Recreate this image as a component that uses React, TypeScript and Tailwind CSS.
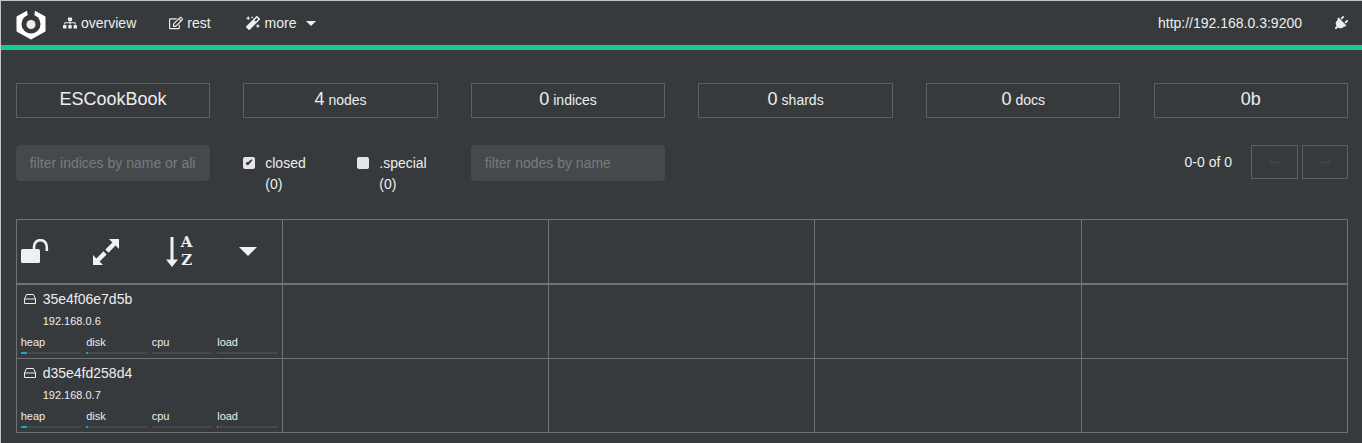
import { FaSitemap, FaRegEdit, FaMagic, FaPlug } from "react-icons/fa";

const STATS = [
  { value: "4", label: "nodes" },
  { value: "0", label: "indices" },
  { value: "0", label: "shards" },
  { value: "0", label: "docs" },
  { value: "0b", label: "" },
];

const NODES = [
  { name: "35e4f06e7d5b", ip: "192.168.0.6", bars: ["w-[11%]", "w-[3%]", "w-0", "w-0"], rowClass: "h-[74px] border-b border-[#6f7274]" },
  { name: "d35e4fd258d4", ip: "192.168.0.7", bars: ["w-[11%]", "w-[3%]", "w-0", "w-[2%]"], rowClass: "h-[73px]" },
];

const METRICS = ["heap", "disk", "cpu", "load"];

function Logo() {
  return (
    <svg width="30" height="32" viewBox="0 0 30 32" className="shrink-0">
      <path d="M15 1.5 L28.5 9 V23 L15 30.5 L1.5 23 V9 Z" fill="#fff" stroke="#fff" strokeWidth="2" strokeLinejoin="round" />
      <circle cx="15" cy="16" r="9.5" fill="#373a3d" />
      <path d="M10.5 0 H19.5 L18 9 H12 Z" fill="#373a3d" />
      <circle cx="15" cy="16.5" r="4.5" fill="#eceeef" />
    </svg>
  );
}

function UnlockIcon() {
  return (
    <svg width="28" height="24" viewBox="0 0 28 24" fill="none">
      <rect x="0" y="10" width="19" height="14" rx="1.5" fill="#eef0f2" />
      <path d="M13 11 V7.5 A6.2 6.2 0 0 1 25.8 7.5 V12" stroke="#eef0f2" strokeWidth="2.6" />
    </svg>
  );
}

function ExpandIcon() {
  return (
    <svg width="26" height="26" viewBox="0 0 26 26" fill="#eef0f2">
      <path d="M16 0 H26 V10 L22.6 6.6 L15.5 13.7 L12.3 10.5 L19.4 3.4 Z" />
      <path d="M10 26 H0 V16 L3.4 19.4 L10.5 12.3 L13.7 15.5 L6.6 22.6 Z" />
    </svg>
  );
}

function SortArrow() {
  return (
    <svg width="12" height="30" viewBox="0 0 12 30" fill="#eef0f2">
      <path d="M4.5 0 H7.5 V22.5 H12 L6 30 L0 22.5 H4.5 Z" />
    </svg>
  );
}

function HddIcon() {
  return (
    <svg width="12" height="10" viewBox="0 0 12 10" fill="none" stroke="#eceeef" className="shrink-0">
      <path d="M2.5 .5 H9.5 L11.5 5 V9.5 H.5 V5 Z M.5 5 H11.5" />
    </svg>
  );
}

function LongArrow({ flip }: { flip?: boolean }) {
  return (
    <svg width="14" height="7" viewBox="0 0 14 7" fill="none" stroke="#47494c" className={flip ? "-scale-x-100" : ""}>
      <path d="M14 3.5 H1 M4 .5 L1 3.5 L4 6.5" />
    </svg>
  );
}

function EmptyCells() {
  return (
    <>
      <div className="border-l border-[#6f7274]" />
      <div className="border-l border-[#6f7274]" />
      <div className="border-l border-[#6f7274]" />
      <div className="border-l border-[#6f7274]" />
    </>
  );
}

export default function App() {
  return (
    <div className="h-[443px] overflow-hidden border-t border-l border-[#c4c4c4] bg-[#373a3d] font-['Liberation_Sans',Arial,sans-serif] text-[#eceeef]">
      <nav className="flex h-[44px] items-center pr-[14px] pl-[15px] text-[14px]">
        <div className="pt-[1px]">
          <Logo />
        </div>
        <a className="ml-[17px] flex items-center gap-[4px]">
          <FaSitemap className="h-[14px] w-[14px]" />
          overview
        </a>
        <a className="ml-[33px] flex items-center gap-[4px]">
          <FaRegEdit className="h-[14px] w-[14px]" />
          rest
        </a>
        <a className="ml-[35px] flex items-center gap-[5px]">
          <FaMagic className="h-[14px] w-[14px]" />
          more
          <span className="ml-[4px] h-0 w-0 border-x-[5px] border-t-[5px] border-x-transparent border-t-[#eceeef]" />
        </a>
        <span className="mr-[31px] ml-auto">http://192.168.0.3:9200</span>
        <FaPlug className="h-[15px] w-[15px] rotate-45" />
      </nav>
      <div className="-ml-px h-[5px] border-l border-[#d9356f] bg-[#1dc78e]" />

      <main className="pt-[33px] pr-[14px] pl-[14.7px]">
        <div className="grid grid-cols-6 gap-x-[33.1px]">
          <div className="flex h-[35px] items-center justify-center border border-[#5d6063] pb-[2px] text-[18px]">ESCookBook</div>
          {STATS.map((s, i) => (
            <div key={i} className="flex h-[35px] items-center justify-center gap-[4px] border border-[#5d6063] pb-[2px] text-[18px]">
              {s.value}
              {s.label && <span className="pt-[2px] text-[14px]">{s.label}</span>}
            </div>
          ))}
        </div>

        <div className="mt-[27px] grid h-[47px] grid-cols-6 gap-x-[33.1px] text-[14px]">
          <input
            readOnly
            placeholder="filter indices by name or aliases"
            className="h-[36px] rounded-[4px] border border-[#46494c] bg-[#46494c] pr-[14px] pl-[13px] text-[14px] outline-none placeholder:text-[#787b7e]"
          />
          <div className="flex">
            <label className="flex w-[114px] items-start gap-[10px] pt-[8px]">
              <span className="mt-[4px] flex h-[12px] w-[12px] items-center justify-center rounded-[2px] bg-[#e6e6e6] text-[10px] leading-none font-bold text-[#333]">✔</span>
              <span className="leading-[21px]">closed<br />(0)</span>
            </label>
            <label className="flex items-start gap-[10px] pt-[8px]">
              <span className="mt-[4px] h-[12px] w-[12px] rounded-[2px] bg-[#e6e6e6]" />
              <span className="leading-[21px] whitespace-nowrap">.special<br />(0)</span>
            </label>
          </div>
          <input
            readOnly
            placeholder="filter nodes by name"
            className="h-[36px] rounded-[4px] border border-[#46494c] bg-[#46494c] px-[13px] text-[14px] outline-none placeholder:text-[#787b7e]"
          />
          <div className="col-span-3 flex h-[36px] items-start justify-end">
            <span className="mt-[7px] mr-[19px]">0-0 of 0</span>
            <button className="flex h-[34px] w-[47px] items-center justify-center border border-[#5d6063]"><LongArrow /></button>
            <button className="ml-[4px] flex h-[34px] w-[46px] items-center justify-center border border-[#5d6063]"><LongArrow flip /></button>
          </div>
        </div>

        <div className="mt-[27px] border border-[#6f7274]">
          <div className="grid h-[65px] grid-cols-[265px_1fr_1fr_1fr_1fr] border-b-2 border-[#6f7274]">
            <div className="flex items-center pl-[4px] text-[#eef0f2]">
              <span className="-mt-[2px] flex"><UnlockIcon /></span>
              <span className="mt-[1px] ml-[44px] flex"><ExpandIcon /></span>
              <span className="ml-[47px] flex"><SortArrow /></span>
              <span className="ml-[2px] flex w-[14px] flex-col items-center font-['DejaVu_Serif',serif] text-[15px] leading-[17.5px] font-bold">
                <span>A</span>
                <span>Z</span>
              </span>
              <span className="ml-[45px] h-0 w-0 border-x-[9px] border-t-[9px] border-x-transparent border-t-[#eef0f2]" />
            </div>
            <EmptyCells />
          </div>
          {NODES.map((n) => (
            <div key={n.name} className={`grid grid-cols-[265px_1fr_1fr_1fr_1fr] ${n.rowClass}`}>
              <div className="px-[4px]">
                <div className="flex items-center pt-[6px] pl-[3px] text-[14px] leading-[16px]">
                  <HddIcon />
                  <span className="ml-[7px]">{n.name}</span>
                </div>
                <div className="mt-[7px] pl-[22px] text-[11px] leading-[14px]">{n.ip}</div>
                <div className="mt-[8px] grid grid-cols-4 gap-x-[5px]">
                  {METRICS.map((m, i) => (
                    <div key={m} className="text-[11px] leading-[12px]">
                      {m}
                      <div className="mt-[4px] h-[2px] bg-[#46494c]">
                        <div className={`h-full bg-[#1ea1d8] ${n.bars[i]}`} />
                      </div>
                    </div>
                  ))}
                </div>
              </div>
              <EmptyCells />
            </div>
          ))}
        </div>
      </main>
    </div>
  );
}
